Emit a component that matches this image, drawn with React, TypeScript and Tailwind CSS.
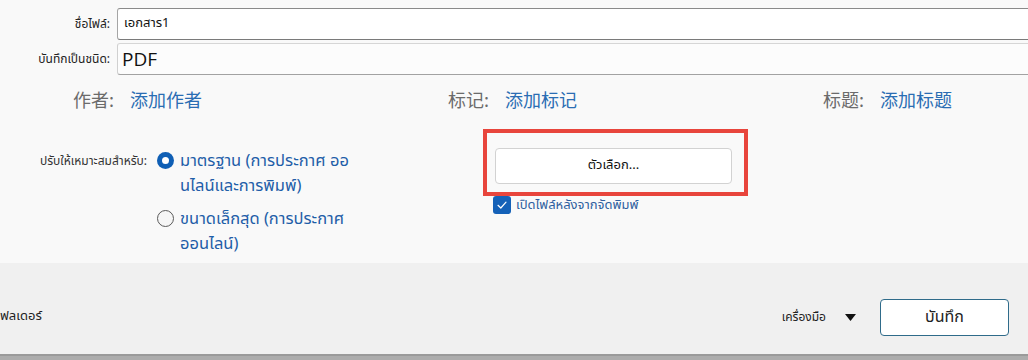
const thai = "font-['Leelawadee_UI','Noto_Sans_Thai','Noto_Sans_Thai_UI','Loma','Garuda','Noto_Sans',sans-serif]";
const cjk = "font-['Microsoft_YaHei','Noto_Sans_CJK_SC','Noto_Sans',sans-serif]";

function Radio({ checked }: { checked?: boolean }) {
  if (checked) {
    return (
      <span className="mt-[4px] flex h-[17px] w-[17px] shrink-0 items-center justify-center rounded-full bg-[#0f5fb5]">
        <span className="h-[7px] w-[7px] rounded-full bg-white" />
      </span>
    );
  }
  return <span className="mt-[4px] h-[17px] w-[17px] shrink-0 rounded-full border border-[#5a5a5a] bg-[#f6f6f6]" />;
}

function MetaField({ label, value }: { label: string; value: string }) {
  return (
    <div className={`flex w-[375px] shrink-0 items-center gap-[16px] text-[18px] ${cjk}`}>
      <span className="text-[#6b6b6b]">{label}</span>
      <span className="text-[#2a6db3]">{value}</span>
    </div>
  );
}

export default function App() {
  return (
    <div className={`flex h-[360px] w-[1028px] flex-col overflow-hidden ${thai}`}>
      <div className="h-[263px] bg-[#f9f9f9] pt-[8px]">
        <div className="flex items-center gap-[7px]">
          <span className="w-[110px] text-right text-[12px] text-[#222]">ชื่อไฟล์:</span>
          <div className="flex h-[32px] flex-1 items-center rounded-l-[3px] border-y border-l border-y-[#8a8a8a] border-l-[#a5a5a5] border-b-[#7a7a7a] bg-white pl-[6px] text-[13px] text-[#111]">
            เอกสาร1
          </div>
        </div>
        <div className="mt-[3px] flex items-center gap-[7px]">
          <span className="w-[110px] text-right text-[12px] text-[#222]">บันทึกเป็นชนิด:</span>
          <div className="flex h-[32px] flex-1 items-center rounded-l-[3px] border-y border-l border-t-[#d6d6d6] border-l-[#d0d0d0] border-b-[#a2a2a2] bg-[#fcfcfc] pl-[4px] font-['Segoe_UI','Open_Sans',sans-serif] text-[19px] text-[#111]">
            PDF
          </div>
        </div>

        <div className="mt-[12px] flex h-[24px] pl-[73px]">
          <MetaField label="作者:" value="添加作者" />
          <MetaField label="标记:" value="添加标记" />
          <MetaField label="标题:" value="添加标题" />
        </div>

        <div className="mt-[18px] flex items-start">
          <div className="flex w-[483px] shrink-0 items-start pl-[29px] pt-[19px]">
            <span className="w-[118px] whitespace-nowrap pt-[3px] text-right text-[12px] leading-[20px] text-[#333]">
              ปรับให้เหมาะสมสำหรับ:
            </span>
            <div className="ml-[10px] flex flex-col gap-[8px]">
              <div className="flex items-start gap-[6px]">
                <Radio checked />
                <span className="whitespace-nowrap text-[16.5px] leading-[25px] text-[#1f5ea8]">
                  มาตรฐาน (การประกาศ ออ
                  <br />
                  นไลน์และการพิมพ์)
                </span>
              </div>
              <div className="flex items-start gap-[6px]">
                <Radio />
                <span className="whitespace-nowrap text-[16.5px] leading-[25px] text-[#1f5ea8]">
                  ขนาดเล็กสุด (การประกาศ
                  <br />
                  ออนไลน์)
                </span>
              </div>
            </div>
          </div>

          <div className="flex flex-col">
            <div className="border-4 border-[#e8453c] pb-[8px] pl-[8px] pr-[12px] pt-[15px]">
              <button className="flex h-[36px] w-[237px] items-center justify-center rounded-[4px] border border-[#d2d2d2] bg-white text-[13px] text-[#111]">
                ตัวเลือก...
              </button>
            </div>
            <div className="ml-[10px] flex items-center gap-[5px] leading-[18px]">
              <span className="flex h-[18px] w-[18px] items-center justify-center rounded-[3px] bg-[#1461b8]">
                <svg width="12" height="12" viewBox="0 0 12 12" fill="none">
                  <path d="M2 6.3 L4.8 9 L10 3.2" stroke="white" strokeWidth="1.2" strokeLinecap="round" strokeLinejoin="round" />
                </svg>
              </span>
              <span className="text-[13px] text-[#2f5f9f]">เปิดไฟล์หลังจากจัดพิมพ์</span>
            </div>
          </div>
        </div>
      </div>

      <div className="flex h-[91px] items-center bg-[#f0f0f0] pt-[17px]">
        <span className="text-[13px] text-[#222]">ฟลเดอร์</span>
        <div className="ml-auto mr-[19px] flex items-center">
          <span className="text-[12px] text-[#222]">เครื่องมือ</span>
          <svg className="ml-[19px]" width="11" height="7" viewBox="0 0 11 7">
            <path d="M0 0 H11 L5.5 7 Z" fill="#111" />
          </svg>
          <button className="ml-[24px] flex h-[37px] w-[129px] items-center justify-center rounded-[4px] border border-[#2f6b8a] bg-white text-[16px] text-[#222]">
            บันทึก
          </button>
        </div>
      </div>

      <div className="h-[2px] bg-[#9a9a9a]" />
      <div className="flex-1 bg-[#acacac]" />
    </div>
  );
}
